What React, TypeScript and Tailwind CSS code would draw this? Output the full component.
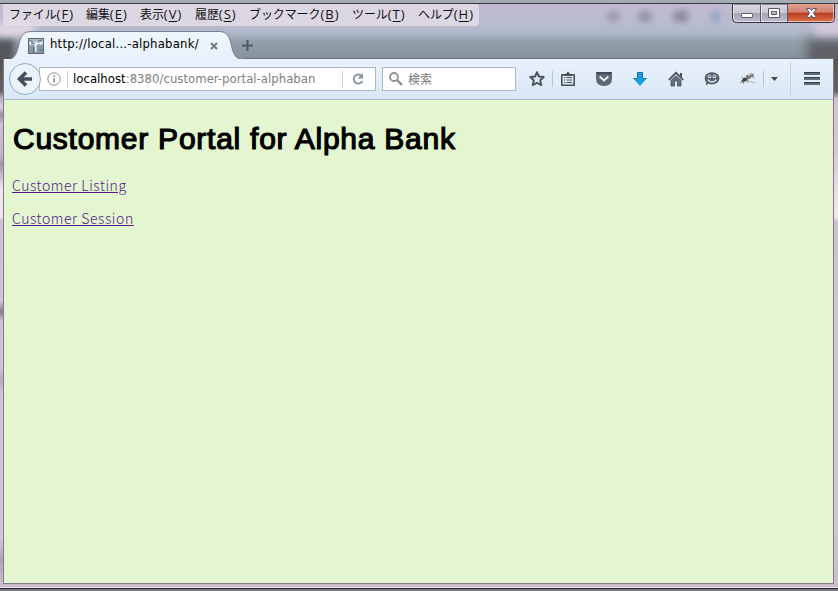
import React from "react";

const uiFont = "font-['DejaVu_Sans_Condensed','Noto_Sans_CJK_JP',sans-serif] [font-stretch:condensed]";
const menuFont = "font-['Noto_Sans_CJK_JP',sans-serif]";

const menus = [
  { label: "ファイル", key: "F", w: "w-[65px]", ml: "ml-[6px]" },
  { label: "編集", key: "E", w: "w-[42px]", ml: "ml-[12px]" },
  { label: "表示", key: "V", w: "w-[43px]", ml: "ml-[12px]" },
  { label: "履歴", key: "S", w: "w-[43px]", ml: "ml-[12px]" },
  { label: "ブックマーク", key: "B", w: "w-[91px]", ml: "ml-[11px]" },
  { label: "ツール", key: "T", w: "w-[54px]", ml: "ml-[12px]" },
  { label: "ヘルプ", key: "H", w: "w-[56px]", ml: "ml-[12px]" },
];

function Menu() {
  return (
    <nav className={`ml-[3px] flex h-[22px] w-[476px] rounded-r-[4px] bg-[#e4dfe8]/80 ${menuFont}`}>
      {menus.map((m) => (
        <span
          key={m.key}
          className={`${m.w} ${m.ml} shrink-0 whitespace-nowrap text-[12px] leading-[19px] tracking-[-0.1px] text-[#111]`}
        >
          {m.label}
          <span className="font-['Open_Sans',sans-serif] text-[13px] tracking-[1px]">
            (<u className="underline-offset-2">{m.key}</u>)
          </span>
        </span>
      ))}
    </nav>
  );
}

function WindowButtons() {
  return (
    <svg className="mr-[3px] h-[19px] w-[103px]" viewBox="0 0 103 19">
      <defs>
        <linearGradient id="glass" x1="0" y1="0" x2="0" y2="1">
          <stop offset="0" stopColor="#dcd9e3" />
          <stop offset=".48" stopColor="#c9c6d3" />
          <stop offset=".52" stopColor="#a6a4b4" />
          <stop offset="1" stopColor="#c3bfce" />
        </linearGradient>
        <linearGradient id="close" x1="0" y1="0" x2="0" y2="1">
          <stop offset="0" stopColor="#dfa08f" />
          <stop offset=".45" stopColor="#d4806e" />
          <stop offset=".52" stopColor="#bd3a20" />
          <stop offset="1" stopColor="#dc7550" />
        </linearGradient>
      </defs>
      <path d="M.5 0V14.500Q.5 18.500 4.500 18.500H98.500Q102.500 18.500 102.500 14.500V0Z" fill="url(#glass)" stroke="#343743" />
      <path d="M56 0H102V14.500Q102 18 98.500 18H56Z" fill="url(#close)" />
      <path d="M1.500 0V14Q1.500 17.500 5 17.500H98Q101.500 17.500 101.500 14V0" fill="none" stroke="#fff" opacity=".55" />
      <path d="M28.500 0V18M55.500 0V18" stroke="#5b5c69" />
      <path d="M29.500 0V17" stroke="#e9e7ee" opacity=".8" />
      <rect x="9.500" y="9.500" width="11" height="4" rx=".7" fill="#fff" stroke="#555a6b" />
      <path d="M36.500 4.500H47.500V13.500H36.500ZM39.500 7.500V10.500H44.500V7.500Z" fill="#fff" fillRule="evenodd" stroke="#555a6b" />
      <path d="M74.500 4.500H78L79.500 6.700 81 4.500H84.500L81.500 9 84.500 13.500H81L79.500 11.300 78 13.500H74.500L77.500 9Z" fill="#fff" stroke="#5a5a6b" />
    </svg>
  );
}

function Tab() {
  return (
    <div className="relative h-[28px] w-[245px]">
      <svg className="absolute inset-0 h-[28px] w-[245px]" viewBox="0 0 245 28">
        <defs>
          <linearGradient id="tab" x1="0" y1="0" x2="0" y2="1">
            <stop offset="0" stopColor="#f0f6fd" />
            <stop offset="1" stopColor="#e8f1fb" />
          </linearGradient>
        </defs>
        <path d="M0 28.500H3C20 28 9 .5 27 .5H215C233 .5 222 28 239 28.500H245" fill="url(#tab)" stroke="#5f6f7e" strokeWidth=".8" />
      </svg>
      <div className="relative flex h-full items-center">
        <svg className="ml-[24px] mt-px h-4 w-4 shrink-0" viewBox="0 0 16 16">
          <rect x=".5" y=".5" width="15" height="15" fill="#829aa9" stroke="#5e6a71" />
          <path d="M1 1H15V5L9 6 1 4Z" fill="#aabac3" />
          <path d="M1 3 5 5 8 4 11 5 15 4 14 7 10 6 8.500 8V14H7V8L4 6 2 8Z" fill="#eff3f3" />
          <path d="M1 2 5 4M10 3 14 2M5.500 9V15M11 12H15M3 5 7 6" stroke="#5d6f7b" fill="none" />
        </svg>
        <span className={`-mt-[2px] ml-[6px] w-[152px] shrink-0 whitespace-nowrap text-[13px] leading-5 tracking-[0.2px] text-black ${uiFont}`}>
          http://local...-alphabank/
        </span>
        <svg className="ml-[8px] mt-[1px] h-2 w-2 shrink-0" viewBox="0 0 8 8">
          <path d="M1 1 7 7M7 1 1 7" stroke="#75808b" strokeWidth="2.200" />
        </svg>
      </div>
    </div>
  );
}

function TitleBar() {
  return (
    <header className="relative h-[59px] overflow-hidden bg-[linear-gradient(180deg,#c5bbd0_0px,#babbce_24px,#aeb8c8_33px,#929eaa_42px,#87939d_58px)]">
      <div className="absolute left-[-14px] top-[38px] h-[35px] w-[28px] bg-[#54575b] blur-[3px]" />
      <div className="absolute left-[-5px] top-[23px] h-[13px] w-[40px] bg-[#e5d9e8] blur-[4px]" />
      <div className="absolute left-[807px] top-[39px] h-[36px] w-[45px] bg-[#5e6064] blur-[6px]" />
      <div className="absolute left-[815px] top-[20px] h-[15px] w-[35px] bg-[#d5c9dc] blur-[4px]" />
      <div className="absolute left-[607px] top-[11px] h-[11px] w-[13px] rounded-full bg-[#777489]/50 blur-[3px]" />
      <div className="absolute left-[638px] top-[11px] h-[11px] w-[14px] rounded-full bg-[#777489]/60 blur-[3px]" />
      <div className="absolute left-[673px] top-[10px] h-[12px] w-[16px] rounded-full bg-[#777489]/70 blur-[3px]" />
      <div className="absolute left-[711px] top-[11px] h-[11px] w-[9px] bg-[#6f9dbd]/60 blur-[3px]" />
      <div className="relative">
        <div className="h-[3px] bg-[#a4abb3]" />
        <div className="h-px bg-[#343941]" />
        <div className="flex h-[27px] items-start justify-between">
          <Menu />
          <WindowButtons />
        </div>
        <div className="flex h-[28px] items-center pl-1">
          <Tab />
          <svg className="-ml-[7px] h-[11px] w-[11px]" viewBox="0 0 11 11">
            <path d="M5.500 0V11M0 5.500H11" stroke="#4c5966" strokeWidth="2" />
          </svg>
        </div>
      </div>
      <div className="absolute bottom-0 left-[244px] h-px w-[590px] bg-[#65727e]" />
    </header>
  );
}

function Icon({ children, className }: { children: React.ReactNode; className: string }) {
  return (
    <svg className={`h-4 w-4 shrink-0 ${className}`} viewBox="0 0 16 16" fill="none">
      {children}
    </svg>
  );
}

function Toolbar() {
  return (
    <div className={`flex h-[41px] items-center border-b border-[#abb8c7] bg-gradient-to-b from-[#e9f2fc] to-[#dae7f6] ${uiFont}`}>
      <svg className="z-10 ml-[5px] h-8 w-8 shrink-0" viewBox="0 0 32 32">
        <circle cx="16" cy="16" r="15.500" fill="#eaf2fb" stroke="#98aabd" />
        <path d="M17 9.500 10.500 16 17 22.500M11 16H23" fill="none" stroke="#46505a" strokeWidth="3.600" />
      </svg>
      <div className="-ml-[2px] flex h-[24px] w-[337px] shrink-0 items-center border border-[#a9bacb] bg-white">
        <svg className="ml-[7px] h-[14px] w-[14px] shrink-0" viewBox="0 0 14 14" fill="none" stroke="#8c8c8c">
          <circle cx="7" cy="7" r="6.200" />
          <path d="M7 6V10.500M7 3.300V5" strokeWidth="1.600" />
        </svg>
        <div className="ml-[6px] h-[17px] w-px bg-[#ccc]" />
        <div className="ml-[5px] w-[269px] whitespace-nowrap text-[13px] leading-5 tracking-[0.02px] text-[#808080]">
          <span className="text-black">localhost</span>:8380/customer-portal-alphaban
        </div>
        <div className="h-[17px] w-px bg-[#ccd3da]" />
        <Icon className="ml-[7px]">
          <path d="M12.300 10A4.500 4.500 0 1 1 11.300 4.700" stroke="#8997a5" strokeWidth="2" />
          <path d="M13 2V7.500H7.500Z" fill="#8997a5" />
        </Icon>
      </div>
      <div className="ml-[6px] flex h-[24px] w-[134px] shrink-0 items-center border border-[#a9bacb] bg-white">
        <Icon className="ml-[5px]">
          <circle cx="6" cy="6" r="4" stroke="#909090" strokeWidth="1.800" />
          <path d="M9 9 14 14" stroke="#909090" strokeWidth="2.400" />
        </Icon>
        <span className={`ml-[4px] text-[12px] leading-5 text-[#777] ${menuFont}`}>検索</span>
      </div>
      <Icon className="ml-[13px]">
        <path d="M8 1.200 9.900 5.500 14.700 6 11.200 9.300 12.200 14.200 8 11.800 3.800 14.200 4.800 9.300 1.300 6 6.100 5.500Z" stroke="#46515c" strokeWidth="1.900" strokeLinejoin="round" />
      </Icon>
      <div className="ml-[7px] h-[16px] w-px bg-[#b8c4d0]" />
      <Icon className="ml-[7px]">
        <path d="M1.800 3.700H14.200V14.300H1.800Z" stroke="#46515c" strokeWidth="1.600" strokeLinejoin="round" />
        <path d="M4 3.500H5.500L8 .5 10.500 3.500H12V5H4Z" fill="#46515c" />
        <path d="M4 6.500H5.200M6.500 6.500H12M4 9H5.200M6.500 9H12M4 11.500H5.200M6.500 11.500H12" stroke="#46515c" strokeWidth="1.200" />
      </Icon>
      <Icon className="ml-5">
        <path d="M0 2Q0 1 1 1H15Q16 1 16 2V7Q16 15 8 15T0 7Z" fill="#5d6874" />
        <path d="M0 3V2Q0 1 1 1H15Q16 1 16 2V3Z" fill="#3e4954" />
        <path d="M3.700 5.500 8 9.500 12.300 5.500" stroke="#e8eff7" strokeWidth="2" />
      </Icon>
      <Icon className="ml-5">
        <path d="M5 1H11V7H15L8 15 1 7H5Z" fill="#1a9ee0" />
        <path d="M5.500 7V1.500H10.500V7M1.500 7.500H5M11 7.500H14.500" stroke="#1c6f9e" />
      </Icon>
      <Icon className="ml-5">
        <path d="M.8 8.800 8 1.800 15.200 8.800" stroke="#46515c" strokeWidth="1.700" />
        <path d="M3 9.300 8 4.700 13 9.300V15H9.500V10H6.500V15H3Z" fill="#66717c" stroke="#46515c" strokeWidth=".8" />
        <path d="M12 2H14V6.500L12 4.500Z" fill="#46515c" />
      </Icon>
      <Icon className="ml-5">
        <path d="M8 1.200C12 1.200 15.500 3.700 15.500 7.300S12 13.400 8 13.400C6.700 13.400 5.500 13.100 4.600 12.800L1.500 14.600 2.300 11.500C1.200 10.400 .7 9 .7 7.300 .7 3.700 4 1.200 8 1.200Z" fill="#58636e" />
        <path d="M4.300 6.500V5.500A1.300 1.300 0 0 1 6.900 5.500V6.500ZM9.100 6.500V5.500A1.300 1.300 0 0 1 11.700 5.500V6.500Z" fill="#58636e" stroke="#e8f0f8" />
        <path d="M3.700 8.600Q8 13.500 12.300 8.600" stroke="#e8f0f8" strokeWidth="1.400" />
      </Icon>
      <Icon className="ml-5">
        <path d="M2 8 6 10M3 13 5 9M7 12 8 9M0 12 4 9" stroke="#6b6d6d" strokeWidth=".8" />
        <path d="M5 5 11 1.500 14.500 3 13.500 6 8 9Z" fill="#c3c3bf" />
        <path d="M1 6 6 7M8 10 15 12M12 6 15 7" stroke="#a4abad" strokeWidth=".8" />
        <ellipse cx="5" cy="8.500" rx="2.300" ry="1.800" fill="#3f403d" />
        <path d="M6 5.500 8 4 9 6 11 3 12 5 9 8 7 8Z" fill="#6c6b66" />
        <circle cx="2.800" cy="10" r="1.300" fill="#4e4a45" />
        <circle cx="12.500" cy="4.500" r="1" fill="#55544f" />
      </Icon>
      <div className="ml-[7px] h-[16px] w-px bg-[#b8c4d0]" />
      <svg className="ml-[7px] h-1 w-[7px]" viewBox="0 0 7 4"><path d="M0 0H7L3.500 4Z" fill="#3f4851" /></svg>
      <div className="ml-[12px] h-[35px] w-px bg-[#c6d4e3]" />
      <Icon className="ml-[13px]">
        <path d="M0 2.500H16M0 7.500H16M0 12.500H16" stroke="#5f6b77" strokeWidth="3" />
        <path d="M0 1.500H16M0 6.500H16M0 11.500H16" stroke="#333f4a" />
      </Icon>
    </div>
  );
}

export default function App() {
  return (
    <div className="flex h-[591px] w-[838px] flex-col overflow-hidden bg-[#d0c0d5]">
      <TitleBar />
      <div className="flex h-[525px]">
        <div className="w-[3px] bg-[linear-gradient(180deg,#555_0px,#606063_32px,#bbb1bf_39px,#d7cadd_49px,#9a8e9f_56px,#cebfd3_65px,#c5b5c9_95px,#a597a9_105px,#eee7f0_130px,#eee7f0_158px,#cfc0d4_162px,#d2c4d8_242px,#887f8c_253px,#cfc0d4_262px,#d3c4d8_308px,#b5a9ba_320px,#d3c5d8_335px,#d3c5d8_480px,#b2a4b6_501px,#ccbdd0_525px)]" />
        <div className="w-[831px] border-x border-b border-[#817a89]">
          <Toolbar />
          <main className="h-[483px] bg-[#e3f6cf] pl-2 pt-[19px]">
            <h1 className="w-[446px] whitespace-nowrap pl-px font-['Liberation_Sans',sans-serif] text-[30px] font-normal leading-10 tracking-[0.75px] text-black [-webkit-text-stroke:1.2px_black]">
              Customer Portal for Alpha Bank
            </h1>
            <div className={`mt-[16px] flex flex-col items-start gap-[12px] text-[14px] font-light leading-[21px] tracking-[0.56px] text-[#551a8b] ${menuFont}`}>
              <a href="#" className="underline underline-offset-1">Customer Listing</a>
              <a href="#" className="underline underline-offset-1">Customer Session</a>
            </div>
          </main>
        </div>
        <div className="w-[4px] bg-[linear-gradient(180deg,#555_0px,#626065_32px,#cfc2d3_40px,#d5c7da_90px,#f0eaf2_158px,#d0c1d5_162px,#d3c4d7_450px,#ccbdd1_525px)]" />
      </div>
      <div className="h-[3px] bg-[#cbbdce]" />
      <div className="h-px bg-[#e6e2e9]" />
      <div className="h-px bg-[#24252b]" />
      <div className="h-[2px] bg-[#777a83]" />
    </div>
  );
}
